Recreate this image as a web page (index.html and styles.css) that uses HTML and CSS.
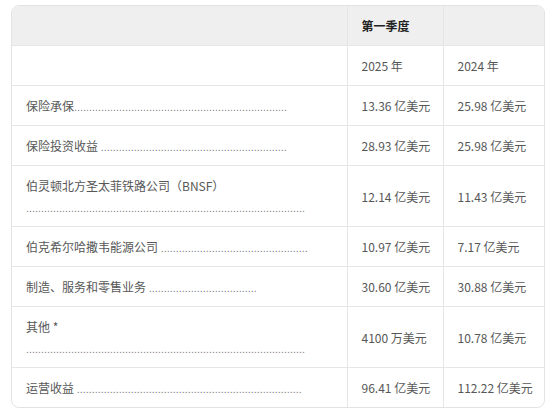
FILE: index.html
```html
<!DOCTYPE html>
<html lang="zh">
<head>
<meta charset="utf-8">
<title>运营收益</title>
<link rel="stylesheet" href="styles.css">
</head>
<body>
<div class="card">
  <table class="earnings">
    <colgroup>
      <col class="c-label">
      <col class="c-num">
      <col class="c-num2">
    </colgroup>
    <thead>
      <tr class="head">
        <th></th>
        <th>第一季度</th>
        <th></th>
      </tr>
    </thead>
    <tbody>
      <tr>
        <td></td>
        <td>2025 年</td>
        <td>2024 年</td>
      </tr>
      <tr>
        <td>保险承保<span class="dots">.......................................................................</span></td>
        <td>13.36 亿美元</td>
        <td>25.98 亿美元</td>
      </tr>
      <tr>
        <td>保险投资收益 <span class="dots">..............................................................</span></td>
        <td>28.93 亿美元</td>
        <td>25.98 亿美元</td>
      </tr>
      <tr>
        <td>伯灵顿北方圣太菲铁路公司（BNSF）<br><span class="dots">.............................................................................................</span></td>
        <td>12.14 亿美元</td>
        <td>11.43 亿美元</td>
      </tr>
      <tr>
        <td>伯克希尔哈撒韦能源公司 <span class="dots">.................................................</span></td>
        <td>10.97 亿美元</td>
        <td>7.17 亿美元</td>
      </tr>
      <tr>
        <td>制造、服务和零售业务 <span class="dots">....................................</span></td>
        <td>30.60 亿美元</td>
        <td>30.88 亿美元</td>
      </tr>
      <tr>
        <td>其他 *<br><span class="dots">.............................................................................................</span></td>
        <td>4100 万美元</td>
        <td>10.78 亿美元</td>
      </tr>
      <tr>
        <td>运营收益 <span class="dots">...........................................................................</span></td>
        <td>96.41 亿美元</td>
        <td>112.22 亿美元</td>
      </tr>
    </tbody>
  </table>
</div>
</body>
</html>
```

FILE: styles.css
```css
html, body {
  margin: 0;
  padding: 0;
  background: #ffffff;
}

body {
  font-family: "Noto Sans CJK SC", "Noto Sans", sans-serif;
  font-size: 12px;
  color: #575757;
}

.card {
  margin: 5px 11px 0 11px;
  border: 1px solid #e3e3e3;
  border-radius: 8px;
  overflow: hidden;
}

.earnings {
  width: 100%;
  border-collapse: collapse;
  table-layout: fixed;
}

.c-label { width: 335px; }
.c-num { width: 96px; }
.c-num2 { width: auto; }

.earnings th,
.earnings td {
  padding: 9px 14px 9px 14px;
  line-height: 21px;
  text-align: left;
  vertical-align: middle;
  border-bottom: 1px solid #e6e6e6;
  border-left: 1px solid #e6e6e6;
  font-weight: normal;
  white-space: nowrap;
}

.earnings th:first-child,
.earnings td:first-child {
  border-left: none;
}

.earnings tbody tr:last-child td {
  border-bottom: none;
}

.head th {
  background: #efefef;
  color: #222222;
  font-weight: bold;
  height: 21px;
}

.dots {
  font-family: "Liberation Sans", sans-serif;
  font-size: 10.8px;
  line-height: 0;
  letter-spacing: 0;
  color: #808080;
  opacity: 0.99;
}
```
